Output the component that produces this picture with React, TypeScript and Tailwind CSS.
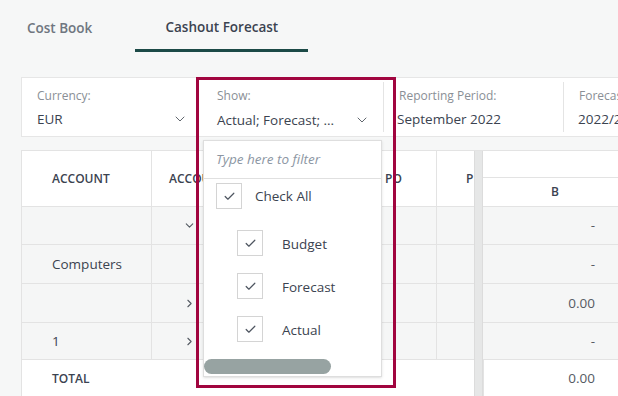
import { Check, ChevronDown, ChevronRight } from "lucide-react";

const rows = [
  { account: "", icon: "down", value: "-", h: "h-[38px]" },
  { account: "Computers", icon: "", value: "-", h: "h-[39px]" },
  { account: "", icon: "right", value: "0.00", h: "h-[39px]" },
  { account: "1", icon: "right", value: "-", h: "h-[37px]" },
];

function Box() {
  return (
    <div className="w-[26px] h-[26px] shrink-0 border border-[#d4d4d4] bg-white flex items-center justify-center">
      <Check size={13} strokeWidth={2.2} className="text-[#4e5560]" />
    </div>
  );
}

export default function App() {
  return (
    <div
      className="relative w-[618px] h-[396px] overflow-hidden bg-[#f6f7f7] text-[#3b4350]"
      style={{ fontFamily: '"Open Sans", "Noto Sans", sans-serif' }}
    >
      {/* Tabs */}
      <div className="flex items-end h-[52px] pl-[27px] text-[13.5px] font-semibold">
        <div className="h-[52px] flex items-center pt-[5px] text-[#6f7680]">Cost Book</div>
        <div className="ml-[43px] w-[173px] shrink-0 h-[52px] flex items-center justify-center pt-[5px] border-b-[3px] border-[#1c4a47]">
          Cashout Forecast
        </div>
      </div>

      {/* Filter bar */}
      <div className="ml-[21px] mt-[25px] h-[60px] flex bg-white border border-[#e6e6e6] border-r-0">
        <div className="w-[176px] shrink-0 my-[4px] pl-[15px] pr-[9px] border-r border-[#e4e4e4]">
          <div className="pt-[6px] text-[12px] leading-[16px] text-[#8a8f96]">Currency:</div>
          <div className="mt-[6px] flex items-center justify-between text-[13.5px] leading-[18px]">
            <span>EUR</span>
            <ChevronDown size={16} strokeWidth={1.4} className="text-[#555b63]" />
          </div>
        </div>
        <div className="w-[186px] shrink-0 my-[4px] pl-[19px] pr-[13px] border-r border-[#e4e4e4]">
          <div className="pt-[6px] text-[12px] leading-[16px] text-[#8a8f96]">Show:</div>
          <div className="mt-[7px] flex items-center justify-between text-[13.5px] leading-[18px]">
            <span>Actual; Forecast; ...</span>
            <ChevronDown size={16} strokeWidth={1.4} className="text-[#555b63]" />
          </div>
        </div>
        <div className="w-[180px] shrink-0 my-[4px] pl-[13px] border-r border-[#e4e4e4]">
          <div className="pt-[6px] pl-[2px] text-[12px] leading-[16px] text-[#8a8f96]">Reporting Period:</div>
          <div className="mt-[6px] text-[13.5px] leading-[18px]">September 2022</div>
        </div>
        <div className="flex-1 my-[4px] pl-[14px] whitespace-nowrap overflow-hidden">
          <div className="pt-[6px] pl-[1px] text-[12px] leading-[16px] text-[#8a8f96]">Forecast Period:</div>
          <div className="mt-[6px] text-[13.5px] leading-[18px]">2022/2023</div>
        </div>
      </div>

      {/* Table */}
      <div className="ml-[21px] mt-[13px] flex border-l border-t border-[#e3e3e3] text-[13.5px]">
        <div className="w-[452px] shrink-0 flex flex-col">
          <div className="h-[56px] grid grid-cols-[130px_228px_57px_37px] bg-white border-b border-[#e3e3e3] text-[12px] font-semibold">
            <div className="flex items-center pl-[30px] border-r border-[#e3e3e3]">ACCOUNT</div>
            <div className="flex items-center pl-[17px] border-r border-[#e3e3e3] whitespace-nowrap">ACCOUNT CODE</div>
            <div className="flex items-center pl-[5px] border-r border-[#e3e3e3] overflow-hidden">PO</div>
            <div className="flex items-center pl-[29px] overflow-hidden whitespace-nowrap">P</div>
          </div>
          {rows.map((r, i) => (
            <div key={i} className={`${r.h} grid grid-cols-[130px_228px_57px_37px] bg-[#f5f6f6] border-b border-[#e3e3e3]`}>
              <div className="flex items-center pl-[30px] border-r border-[#e3e3e3]">{r.account}</div>
              <div className="flex items-center pl-[31px] border-r border-[#e3e3e3] text-[#555b63]">
                {r.icon === "down" && <ChevronDown size={13} strokeWidth={2} />}
                {r.icon === "right" && <ChevronRight size={13} strokeWidth={2} />}
              </div>
              <div className="border-r border-[#e3e3e3]" />
              <div />
            </div>
          ))}
          <div className="h-[37px] flex items-center pl-[30px] bg-white text-[12px] font-semibold">TOTAL</div>
        </div>

        {/* splitter */}
        <div className="w-[9px] shrink-0 bg-[#e6e7e7] border-x border-[#dcdcdc]" />

        <div className="w-[144px] shrink-0 flex flex-col">
          <div className="h-[27px] bg-white border-b border-[#e3e3e3]" />
          <div className="h-[29px] bg-white border-b border-[#e3e3e3] flex items-center justify-center text-[12px] font-semibold">
            B
          </div>
          {rows.map((r, i) => (
            <div key={i} className={`${r.h} flex items-center justify-end pr-[32px] bg-[#f5f6f6] border-b border-[#e3e3e3] text-[#555b63]`}>
              {r.value}
            </div>
          ))}
          <div className="h-[37px] flex items-center justify-end pr-[32px] bg-white border-l border-[#e3e3e3] text-[#555b63]">
            0.00
          </div>
        </div>
      </div>

      {/* Dropdown popup */}
      <div className="absolute left-[203px] top-[140px] w-[179px] h-[237px] bg-white border border-[#dedede] shadow-sm overflow-hidden">
        <div className="h-[38px] flex items-center pl-[12px] border-b border-[#e0e0e0] text-[13.5px] italic text-[#8c96a3]">
          Type here to filter
        </div>
        <div className="flex items-center mt-[4px] pl-[12px]">
          <Box />
          <span className="ml-[13px] text-[13.5px]">Check All</span>
        </div>
        <div className="flex flex-col gap-[17px] mt-[21px] pl-[33px] text-[13.5px]">
          <div className="flex items-center">
            <Box />
            <span className="ml-[19px] pt-[3px]">Budget</span>
          </div>
          <div className="flex items-center">
            <Box />
            <span className="ml-[19px] pt-[3px]">Forecast</span>
          </div>
          <div className="flex items-center">
            <Box />
            <span className="ml-[19px] pt-[3px]">Actual</span>
          </div>
        </div>
        <div className="absolute left-[0px] bottom-[2px] w-[127px] h-[15px] rounded-full bg-[#97a3a2]" />
      </div>

      {/* Highlight frame */}
      <div className="absolute left-[196px] top-[77px] w-[200px] h-[311px] border-[3px] border-[#a1053f] pointer-events-none" />
    </div>
  );
}
